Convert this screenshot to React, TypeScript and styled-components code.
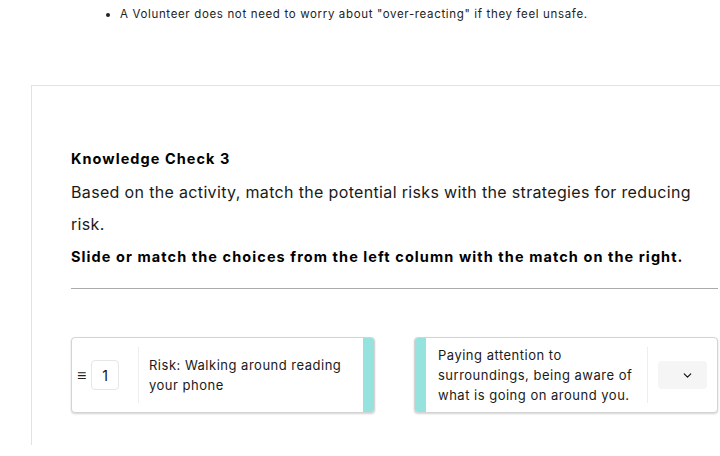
import { ChevronDown } from 'lucide-react';
import styled, { createGlobalStyle } from 'styled-components';

const GlobalStyle = createGlobalStyle`
  html, body {
    margin: 0;
    padding: 0;
    background: #fff;
    overflow: hidden;
  }
  body {
    font-family: Inter, "Noto Sans", Arial, sans-serif;
    color: #111;
  }
`;

const Page = styled.div`
  width: 720px;
  height: 456px;
  overflow: hidden;
`;

const BulletList = styled.ul`
  margin: 0;
  padding: 4px 0 0 120px;
  height: 85px;
  box-sizing: border-box;
  li {
    font-size: 11.5px;
    line-height: 20px;
    letter-spacing: 0.65px;
    color: #222;
  }
`;

const Panel = styled.section`
  margin-left: 31px;
  width: 740px;
  height: 360px;
  box-sizing: border-box;
  border-top: 1px solid #e2e2e2;
  border-left: 1px solid #e2e2e2;
  padding: 62px 0 0 39px;
`;

const Content = styled.div`
  width: 647px;
`;

const Title = styled.h3`
  margin: 0 0 6px;
  font-size: 14.5px;
  font-weight: 700;
  line-height: 22px;
  letter-spacing: 1.05px;
  color: #000;
`;

const Prompt = styled.p`
  margin: 0;
  font-size: 16px;
  line-height: 32px;
  letter-spacing: 0.34px;
  color: #1a1a1a;
`;

const Instruction = styled.p`
  margin: 0;
  font-size: 14.5px;
  font-weight: 700;
  line-height: 33px;
  letter-spacing: 1.08px;
  color: #000;
`;

const Rule = styled.hr`
  margin: 15px 0 48px;
  border: 0;
  border-top: 1px solid #aaa;
`;

const CardRow = styled.div`
  display: flex;
  gap: 39px;
`;

const Card = styled.div`
  flex: 1;
  height: 76px;
  display: flex;
  align-items: center;
  box-sizing: border-box;
  border: 1px solid #d4d4d4;
  border-radius: 4px;
  box-shadow: 0 1px 2px rgba(0, 0, 0, 0.18);
  overflow: hidden;
  background: #fff;
`;

const Strip = styled.div`
  width: 11px;
  align-self: stretch;
  background: #95e2de;
  flex-shrink: 0;
`;

const Handle = styled.span`
  margin-left: 5px;
  font-size: 16px;
  width: 10px;
  color: #222;
`;

const OrderBox = styled.div`
  margin-left: 4px;
  width: 28px;
  height: 30px;
  box-sizing: border-box;
  border: 1px solid #e6e6e6;
  border-radius: 4px;
  display: flex;
  align-items: center;
  justify-content: center;
  font-size: 14px;
  color: #111;
`;

const Spacer = styled.div`
  width: 19px;
`;

const Divider = styled.div`
  width: 1px;
  height: 56px;
  background: #eeeeee;
  flex-shrink: 0;
`;

const CardText = styled.div<{ $pad: string }>`
  flex: 1;
  padding: ${(p) => p.$pad};
  font-size: 13px;
  line-height: 20px;
  letter-spacing: 0.5px;
  color: #1a1a1a;
`;

const SelectBox = styled.div`
  margin: 0 10px;
  width: 49px;
  height: 28px;
  border-radius: 4px;
  background: #f5f5f5;
  display: flex;
  align-items: center;
  justify-content: flex-end;
  padding-right: 13px;
  box-sizing: border-box;
  color: #111;
`;

const App = () => {
  return (
    <Page>
      <GlobalStyle />
      <BulletList>
        <li>A Volunteer does not need to worry about "over-reacting" if they feel unsafe.</li>
      </BulletList>
      <Panel>
        <Content>
          <Title>Knowledge Check 3</Title>
          <Prompt>
            Based on the activity, match the potential risks with the strategies for reducing risk.
          </Prompt>
          <Instruction>
            Slide or match the choices from the left column with the match on the right.
          </Instruction>
          <Rule />
          <CardRow>
            <Card>
              <Handle>≡</Handle>
              <OrderBox>1</OrderBox>
              <Spacer />
              <Divider />
              <CardText $pad="0 14px 0 10px">Risk: Walking around reading your phone</CardText>
              <Strip />
            </Card>
            <Card>
              <Strip />
              <CardText $pad="0 10px 0 12px">
                Paying attention to surroundings, being aware of what is going on around you.
              </CardText>
              <Divider />
              <SelectBox>
                <ChevronDown size={13} strokeWidth={2.2} />
              </SelectBox>
            </Card>
          </CardRow>
        </Content>
      </Panel>
    </Page>
  );
};

export default App;
